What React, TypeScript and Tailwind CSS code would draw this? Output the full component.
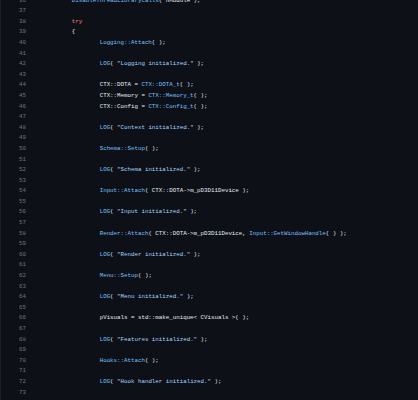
type Tok = [string, string?];

const B = 'text-[#79c0ff]';
const S = 'text-[#a5d6ff]';
const K = 'text-[#ff7b72]';

const LINES: { n: number; indent: number; toks: Tok[] }[] = [
  { n: 36, indent: 1, toks: [['DisableThreadLibraryCalls', B], ['( hModule );']] },
  { n: 37, indent: 0, toks: [] },
  { n: 38, indent: 1, toks: [['try', K]] },
  { n: 39, indent: 1, toks: [['{']] },
  { n: 40, indent: 2, toks: [['Logging::Attach', B], ['( );']] },
  { n: 41, indent: 0, toks: [] },
  { n: 42, indent: 2, toks: [['LOG', B], ['( '], ['"Logging initialized."', S], [' );']] },
  { n: 43, indent: 0, toks: [] },
  { n: 44, indent: 2, toks: [['CTX::DOTA = '], ['CTX::DOTA_t', B], ['( );']] },
  { n: 45, indent: 2, toks: [['CTX::Memory = '], ['CTX::Memory_t', B], ['( );']] },
  { n: 46, indent: 2, toks: [['CTX::Config = '], ['CTX::Config_t', B], ['( );']] },
  { n: 47, indent: 0, toks: [] },
  { n: 48, indent: 2, toks: [['LOG', B], ['( '], ['"Context initialized."', S], [' );']] },
  { n: 49, indent: 0, toks: [] },
  { n: 50, indent: 2, toks: [['Schema::Setup', B], ['( );']] },
  { n: 51, indent: 0, toks: [] },
  { n: 52, indent: 2, toks: [['LOG', B], ['( '], ['"Schema initialized."', S], [' );']] },
  { n: 53, indent: 0, toks: [] },
  { n: 54, indent: 2, toks: [['Input::Attach', B], ['( CTX::DOTA->m_pD3D11Device );']] },
  { n: 55, indent: 0, toks: [] },
  { n: 56, indent: 2, toks: [['LOG', B], ['( '], ['"Input initialized."', S], [' );']] },
  { n: 57, indent: 0, toks: [] },
  {
    n: 58,
    indent: 2,
    toks: [['Render::Attach', B], ['( CTX::DOTA->m_pD3D11Device, '], ['Input::GetWindowHandle', B], ['( ) );']],
  },
  { n: 59, indent: 0, toks: [] },
  { n: 60, indent: 2, toks: [['LOG', B], ['( '], ['"Render initialized."', S], [' );']] },
  { n: 61, indent: 0, toks: [] },
  { n: 62, indent: 2, toks: [['Menu::Setup', B], ['( );']] },
  { n: 63, indent: 0, toks: [] },
  { n: 64, indent: 2, toks: [['LOG', B], ['( '], ['"Menu initialized."', S], [' );']] },
  { n: 65, indent: 0, toks: [] },
  { n: 66, indent: 2, toks: [['pVisuals = std::make_unique< CVisuals >( );']] },
  { n: 67, indent: 0, toks: [] },
  { n: 68, indent: 2, toks: [['LOG', B], ['( '], ['"Features initialized."', S], [' );']] },
  { n: 69, indent: 0, toks: [] },
  { n: 70, indent: 2, toks: [['Hooks::Attach', B], ['( );']] },
  { n: 71, indent: 0, toks: [] },
  { n: 72, indent: 2, toks: [['LOG', B], ['( '], ['"Hook handler initialized."', S], [' );']] },
  { n: 73, indent: 0, toks: [] },
];

export default function App() {
  return (
    <div className="w-[418px] h-[400px] overflow-hidden bg-[#0d1117] border-l border-[#1c2129] font-['Liberation_Mono',monospace] text-[5.8px] leading-[10.6px] text-[#e6edf3]">
      <div className="-mt-[4.4px]">
        {LINES.map((line) => (
          <div key={line.n} className="flex h-[10.6px]">
            <div className="w-[25px] shrink-0 text-right text-[#6e7681]">{line.n}</div>
            <div className="pl-[18px] whitespace-pre [tab-size:8]">
              {'\t'.repeat(line.indent)}
              {line.toks.map(([t, c], i) => (
                <span key={i} className={c}>
                  {t}
                </span>
              ))}
            </div>
          </div>
        ))}
      </div>
    </div>
  );
}
